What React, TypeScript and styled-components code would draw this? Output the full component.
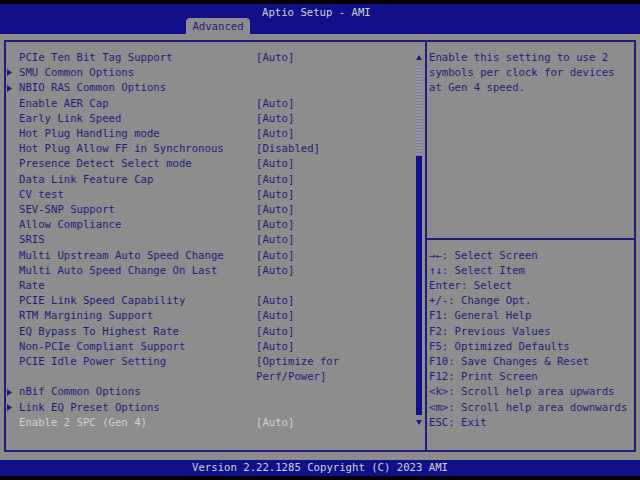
import styled, { createGlobalStyle } from "styled-components";

const NAVY = "#1e1e7c";
const GREY = "#8d8d8d";
const BLUE = "#10108a";
const LIGHT = "#d2d2d2";
const ROW = 15.2;

const GlobalStyle = createGlobalStyle`
  html, body {
    margin: 0;
    padding: 0;
    background: #000;
  }
  body {
    font-family: "DejaVu Sans Mono", "Liberation Mono", monospace;
    font-size: 10.63px;
  }
`;

const Screen = styled.div`
  width: 640px;
  height: 480px;
  padding-top: 4px;
  box-sizing: border-box;
  background: #000;
  display: flex;
  flex-direction: column;
  overflow: hidden;
`;

const Header = styled.header`
  height: 30px;
  background: ${BLUE};
  display: flex;
  flex-direction: column;
`;

const Title = styled.div`
  height: 14px;
  line-height: 17px;
  padding-left: 262px;
  color: ${LIGHT};
  white-space: pre;
`;

const TabRow = styled.div`
  height: 16px;
  padding-left: 186px;
  display: flex;
`;

const Tab = styled.div`
  width: 64px;
  height: 16px;
  line-height: 17px;
  text-align: center;
  background: ${GREY};
  color: ${NAVY};
  border-radius: 4px 4px 0 0;
`;

const Body = styled.main`
  height: 426px;
  background: ${GREY};
  padding: 6px 4px 8px 4px;
  box-sizing: border-box;
`;

const Frame = styled.div`
  height: 100%;
  border: 2px solid ${NAVY};
  box-sizing: border-box;
  display: flex;
`;

const LeftPanel = styled.section`
  width: 419px;
  padding-top: 8px;
  display: flex;
`;

const List = styled.div`
  width: 410px;
  display: flex;
  flex-direction: column;
`;

const Row = styled.div<{ $selected?: boolean }>`
  display: grid;
  grid-template-columns: 13px 237px 96px;
  line-height: ${ROW}px;
  color: ${(p) => (p.$selected ? LIGHT : NAVY)};
`;

const Marker = styled.div`
  height: ${ROW}px;
  padding-left: 1px;
  display: flex;
  align-items: center;
`;

const Label = styled.div`
  max-width: 212px;
`;

const Value = styled.div``;

const Scrollbar = styled.div`
  width: 6.4px;
  display: flex;
  flex-direction: column;
`;

const ScrollArrow = styled.div`
  height: ${ROW}px;
  display: flex;
  align-items: center;
  justify-content: center;
`;

const Thumb = styled.div`
  height: ${ROW * 6}px;
  background-color: #9595a4;
  background-image: repeating-linear-gradient(
    0deg,
    rgba(40, 40, 130, 0.25) 0 1px,
    transparent 1px 3px
  );
`;

const Track = styled.div`
  height: ${ROW * 17}px;
  background: ${BLUE};
`;

const RightPanel = styled.section`
  flex: 1;
  border-left: 2px solid ${NAVY};
  display: flex;
  flex-direction: column;
  color: ${NAVY};
  line-height: ${ROW}px;
`;

const HelpArea = styled.div`
  height: 198px;
  padding: 8px 0 0 2px;
  box-sizing: border-box;
  border-bottom: 2px solid ${NAVY};
`;

const Keys = styled.div`
  padding: 7.6px 0 0 2px;
`;

const Line = styled.div`
  white-space: pre;
`;

const Footer = styled.footer`
  height: 16px;
  line-height: 16px;
  background: ${BLUE};
  color: ${LIGHT};
  text-align: center;
`;

type Item = {
  label: string;
  value?: string;
  submenu?: boolean;
  selected?: boolean;
};

const items: Item[] = [
  { label: "PCIe Ten Bit Tag Support", value: "[Auto]" },
  { label: "SMU Common Options", submenu: true },
  { label: "NBIO RAS Common Options", submenu: true },
  { label: "Enable AER Cap", value: "[Auto]" },
  { label: "Early Link Speed", value: "[Auto]" },
  { label: "Hot Plug Handling mode", value: "[Auto]" },
  { label: "Hot Plug Allow FF in Synchronous", value: "[Disabled]" },
  { label: "Presence Detect Select mode", value: "[Auto]" },
  { label: "Data Link Feature Cap", value: "[Auto]" },
  { label: "CV test", value: "[Auto]" },
  { label: "SEV-SNP Support", value: "[Auto]" },
  { label: "Allow Compliance", value: "[Auto]" },
  { label: "SRIS", value: "[Auto]" },
  { label: "Multi Upstream Auto Speed Change", value: "[Auto]" },
  { label: "Multi Auto Speed Change On Last Rate", value: "[Auto]" },
  { label: "PCIE Link Speed Capability", value: "[Auto]" },
  { label: "RTM Margining Support", value: "[Auto]" },
  { label: "EQ Bypass To Highest Rate", value: "[Auto]" },
  { label: "Non-PCIe Compliant Support", value: "[Auto]" },
  { label: "PCIE Idle Power Setting", value: "[Optimize for Perf/Power]" },
  { label: "nBif Common Options", submenu: true },
  { label: "Link EQ Preset Options", submenu: true },
  { label: "Enable 2 SPC (Gen 4)", value: "[Auto]", selected: true },
];

const help = [
  "Enable this setting to use 2",
  "symbols per clock for devices",
  "at Gen 4 speed.",
];

const keys = [
  "\u2192\u2190: Select Screen",
  "\u2191\u2193: Select Item",
  "Enter: Select",
  "+/-: Change Opt.",
  "F1: General Help",
  "F2: Previous Values",
  "F5: Optimized Defaults",
  "F10: Save Changes & Reset",
  "F12: Print Screen",
  "<k>: Scroll help area upwards",
  "<m>: Scroll help area downwards",
  "ESC: Exit",
];

const Triangle = ({ dir }: { dir: "right" | "up" | "down" }) => {
  const points =
    dir === "right" ? "0,0 5,3.5 0,7" : dir === "up" ? "0,5 3,0 6,5" : "0,0 6,0 3,5";
  const w = dir === "right" ? 5 : 6;
  const h = dir === "right" ? 7 : 5;
  return (
    <svg width={w} height={h} viewBox={`0 0 ${w} ${h}`}>
      <polygon points={points} fill={NAVY} />
    </svg>
  );
};

export default function App() {
  return (
    <>
      <GlobalStyle />
      <Screen>
        <Header>
          <Title>Aptio Setup - AMI</Title>
          <TabRow>
            <Tab>Advanced</Tab>
          </TabRow>
        </Header>
        <Body>
          <Frame>
            <LeftPanel>
              <List>
                {items.map((item) => (
                  <Row key={item.label} $selected={item.selected}>
                    <Marker>{item.submenu && <Triangle dir="right" />}</Marker>
                    <Label>{item.label}</Label>
                    <Value>{item.value}</Value>
                  </Row>
                ))}
              </List>
              <Scrollbar>
                <ScrollArrow>
                  <Triangle dir="up" />
                </ScrollArrow>
                <Thumb />
                <Track />
                <ScrollArrow>
                  <Triangle dir="down" />
                </ScrollArrow>
              </Scrollbar>
            </LeftPanel>
            <RightPanel>
              <HelpArea>
                {help.map((l) => (
                  <Line key={l}>{l}</Line>
                ))}
              </HelpArea>
              <Keys>
                {keys.map((k) => (
                  <Line key={k}>{k}</Line>
                ))}
              </Keys>
            </RightPanel>
          </Frame>
        </Body>
        <Footer>Version 2.22.1285 Copyright (C) 2023 AMI</Footer>
      </Screen>
    </>
  );
}
